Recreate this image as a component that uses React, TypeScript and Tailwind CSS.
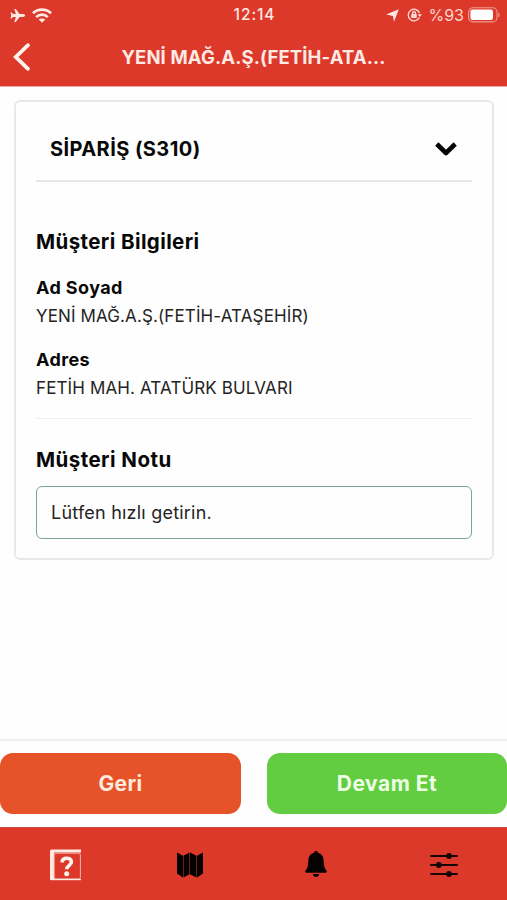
import * as React from 'react'

function StatusBar() {
  return (
    <div className="relative flex h-[30px] items-center">
      {/* Airplane */}
      <svg className="ml-[10px] h-[13px] w-[15px]" viewBox="0 0 15 13" fill="#ffe9e2">
        <path d="M15 6.5c0-.9-1-1.4-2-1.4H9.6L5.8 0H4.3l1.6 5.1H3L1.7 3.4H.5l.8 3.1-.8 3.1h1.2L3 7.9h2.9L4.3 13h1.5l3.8-5.1H13c1 0 2-.5 2-1.4z" />
      </svg>
      {/* Wifi */}
      <svg className="ml-[7px] h-[15px] w-[20px]" viewBox="0 0 20 15" fill="none" stroke="#ffe9e2" strokeWidth="2.7">
        <path d="M1 5.3C6 .4 14 .4 19 5.3" />
        <path d="M4.2 9.1c3.3-3.3 8.3-3.3 11.6 0" />
        <path d="M10 14.7l-3.3-3.2c1.800-1.300 4.800-1.300 6.600 0z" fill="#ffe9e2" stroke="none" />
      </svg>
      <span className="absolute left-px w-full text-center text-[15.5px] leading-[30px] font-medium tracking-[0.9px] text-[#ffe9e2]">
        12:14
      </span>
      {/* Location */}
      <svg className="ml-auto h-[13px] w-[13px]" viewBox="0 0 13 13" fill="#ffe9e2">
        <path d="M12.800.2 8 12.800 6.900 7 .2 5.600z" />
      </svg>
      {/* Rotation lock */}
      <svg className="ml-[8px] h-[14px] w-[15px]" viewBox="0 0 15 14" fill="none" stroke="#ffd9d0" strokeWidth="1.4">
        <path d="M12.300 9.500A5.800 5.800 0 1 1 12.500 5" />
        <path d="M10.600 6.200h4.400l-2.200 2.800z" fill="#ffd9d0" stroke="none" />
        <rect x="4.300" y="6.100" width="5.400" height="4" rx=".6" fill="#ffd9d0" stroke="none" />
        <path d="M5.500 6.500V5.300a1.500 1.500 0 0 1 3 0v1.200" />
      </svg>
      <span className="ml-[6px] text-[16px] leading-[30px] text-[#ffd6cc]">%93</span>
      {/* Battery */}
      <svg className="mr-[7px] ml-[4px] h-[16px] w-[32px]" viewBox="0 0 32 16">
        <rect x=".6" y=".7" width="28.4" height="14.200" rx="4.5" fill="none" stroke="#f09a8e" strokeWidth="1.1" />
        <rect x="2.400" y="2.600" width="22.600" height="10.400" rx="2.2" fill="#ffffff" />
        <path d="M30.300 5.600c1.800.8 1.800 3.900 0 4.700z" fill="#f09a8e" />
      </svg>
    </div>
  )
}

function Header() {
  return (
    <header className="h-[87px] shrink-0 border-b border-[#e9a79f] bg-[#dc392b]">
      <StatusBar />
      <div className="relative flex h-[54px] items-center justify-center">
        <button className="absolute top-[12px] left-[11px]" aria-label="Geri dön">
          <svg className="h-[30px] w-[20px]" viewBox="0 0 20 30" fill="none" stroke="#fff3ee" strokeWidth="3.8" strokeLinecap="round">
            <path d="M17 3.200 4.800 15 17 26.800" />
          </svg>
        </button>
        <h1 className="text-[18.5px] leading-[54px] font-bold tracking-[0.12px] whitespace-nowrap text-[#ffeae3]">
          YENİ MAĞ.A.Ş.(FETİH-ATA...
        </h1>
      </div>
    </header>
  )
}

function InfoField({ label, value }: { label: string; value: string }) {
  return (
    <div className="mb-[16px]">
      <h3 className="text-[18px] leading-[27px] font-bold tracking-[0.4px] text-[#080808]">{label}</h3>
      <p className="pt-px text-[17px] leading-[28px] tracking-[0.12px] whitespace-nowrap text-[#242424]">{value}</p>
    </div>
  )
}

function OrderCard() {
  return (
    <section className="mt-[13px] mr-[13px] ml-[14px] h-[460px] rounded-[6px] border-2 border-[#e8e9e8] px-[20px]">
      <div className="flex h-[80px] items-center justify-between border-b-2 border-[#e6e6e6] pt-[15px] pr-[15px] pl-[14px]">
        <h2 className="text-[20px] leading-[30px] font-bold tracking-[0.42px] text-[#080808]">SİPARİŞ (S310)</h2>
        <svg className="mt-[1px] h-[16px] w-[22px]" viewBox="0 0 22 16" fill="none" stroke="#050505" strokeWidth="4.6" strokeLinejoin="round">
          <path d="M1.800 3 11 12l9.200-9" />
        </svg>
      </div>

      <h2 className="mt-[45px] mb-[17px] text-[20.5px] leading-[30px] font-bold tracking-[0.4px] text-[#080808]">
        Müşteri Bilgileri
      </h2>
      <InfoField label="Ad Soyad" value="YENİ MAĞ.A.Ş.(FETİH-ATAŞEHİR)" />
      <InfoField label="Adres" value="FETİH MAH. ATATÜRK BULVARI" />

      <div className="border-t border-[#eeeeee] pt-[26px]">
        <h2 className="text-[20.5px] leading-[30px] font-bold tracking-[0.45px] text-[#080808]">Müşteri Notu</h2>
        <div className="mt-[11px] flex h-[53px] items-center rounded-[6px] border-[1.5px] border-[#7fa590] pl-[14px] text-[18px] tracking-[0.22px] text-[#242424]">
          Lütfen hızlı getirin.
        </div>
      </div>
    </section>
  )
}

function TabBar() {
  return (
    <nav className="flex h-[73px] shrink-0 items-center border-t border-[#c94a3c] bg-[#dc392b] pt-px">
      <div className="flex w-[131px] justify-center">
        <svg className="h-[32px] w-[32px]" viewBox="0 0 32 32" fill="none">
          <path d="M0 2A1.5 1.5 0 0 1 1.5.5H31v3H4V31H0z" fill="#ffeae3" />
          <rect x="4.200" y="4.200" width="26.2" height="25.800" rx="2" stroke="#f3b3a8" strokeWidth="1" />
          <path d="M1 30.500h30" stroke="#ffeae3" strokeWidth="1.4" />
          <path d="M12 13.400c.2-2.700 2-4.200 4.700-4.200s4.700 1.500 4.700 3.900c0 3.400-4.600 3.200-4.600 7.200" stroke="#fff3ee" strokeWidth="3.6" />
          <circle cx="16.700" cy="24.700" r="2.5" fill="#fff3ee" />
        </svg>
      </div>
      <div className="flex w-[118px] justify-center">
        <svg className="h-[26px] w-[28px]" viewBox="0 0 28 26" fill="#060202">
          <path d="M1 .6 7 3.800v21.800L1 21.400zM7.500 3.800l6-3.200v21.600l-6 3.400zM14 .6l6.500 3.200v21.800L14 22.200zM21 3.800 27 .6v20.800l-6 4.200z" />
        </svg>
      </div>
      <div className="flex w-[134px] justify-center">
        <svg className="h-[27px] w-[22px]" viewBox="0 0 22 27" fill="#060202">
          <path d="M11 0c1.300 0 1.800.8 2 1.800 3.600.8 5.500 3.700 5.700 8 .2 5.400.8 7.200 2.700 9.700.8 1.100.3 2.300-1 2.300H1.600c-1.300 0-1.800-1.200-1-2.300 1.900-2.500 2.500-4.300 2.700-9.700.2-4.300 2.100-7.200 5.700-8C9.200.8 9.700 0 11 0z" />
          <path d="M7.800 22.900h6.400c-.4 4-6 4-6.400 0z" />
        </svg>
      </div>
      <div className="flex flex-1 justify-center pr-[2px]">
        <svg className="h-[24px] w-[28px]" viewBox="0 0 28 24" fill="#160605" stroke="#160605" strokeWidth="2" strokeLinecap="round">
          <path d="M1 3h26M1 12h26M1 21h26" />
          <circle cx="19" cy="3" r="1.9" />
          <circle cx="8.800" cy="12" r="1.9" />
          <circle cx="19" cy="21" r="1.9" />
        </svg>
      </div>
    </nav>
  )
}

export default function App() {
  return (
    <div className="flex h-[900px] w-[507px] flex-col overflow-hidden bg-[#fefefe] font-['Inter','Liberation_Sans',sans-serif]">
      <Header />
      <main className="flex-1">
        <OrderCard />
      </main>
      <div className="flex h-[88px] shrink-0 justify-between border-t-2 border-[#eeeeee] pt-[12px]">
        <button className="h-[61px] w-[241px] rounded-[13px] bg-[#e65328] text-[21px] font-bold tracking-[0.3px] text-[#ffeadf]">
          Geri
        </button>
        <button className="h-[61px] w-[240px] rounded-[13px] bg-[#62cd40] text-[21px] font-bold tracking-[0.5px] text-[#efffe5]">
          Devam Et
        </button>
      </div>
      <TabBar />
    </div>
  )
}
